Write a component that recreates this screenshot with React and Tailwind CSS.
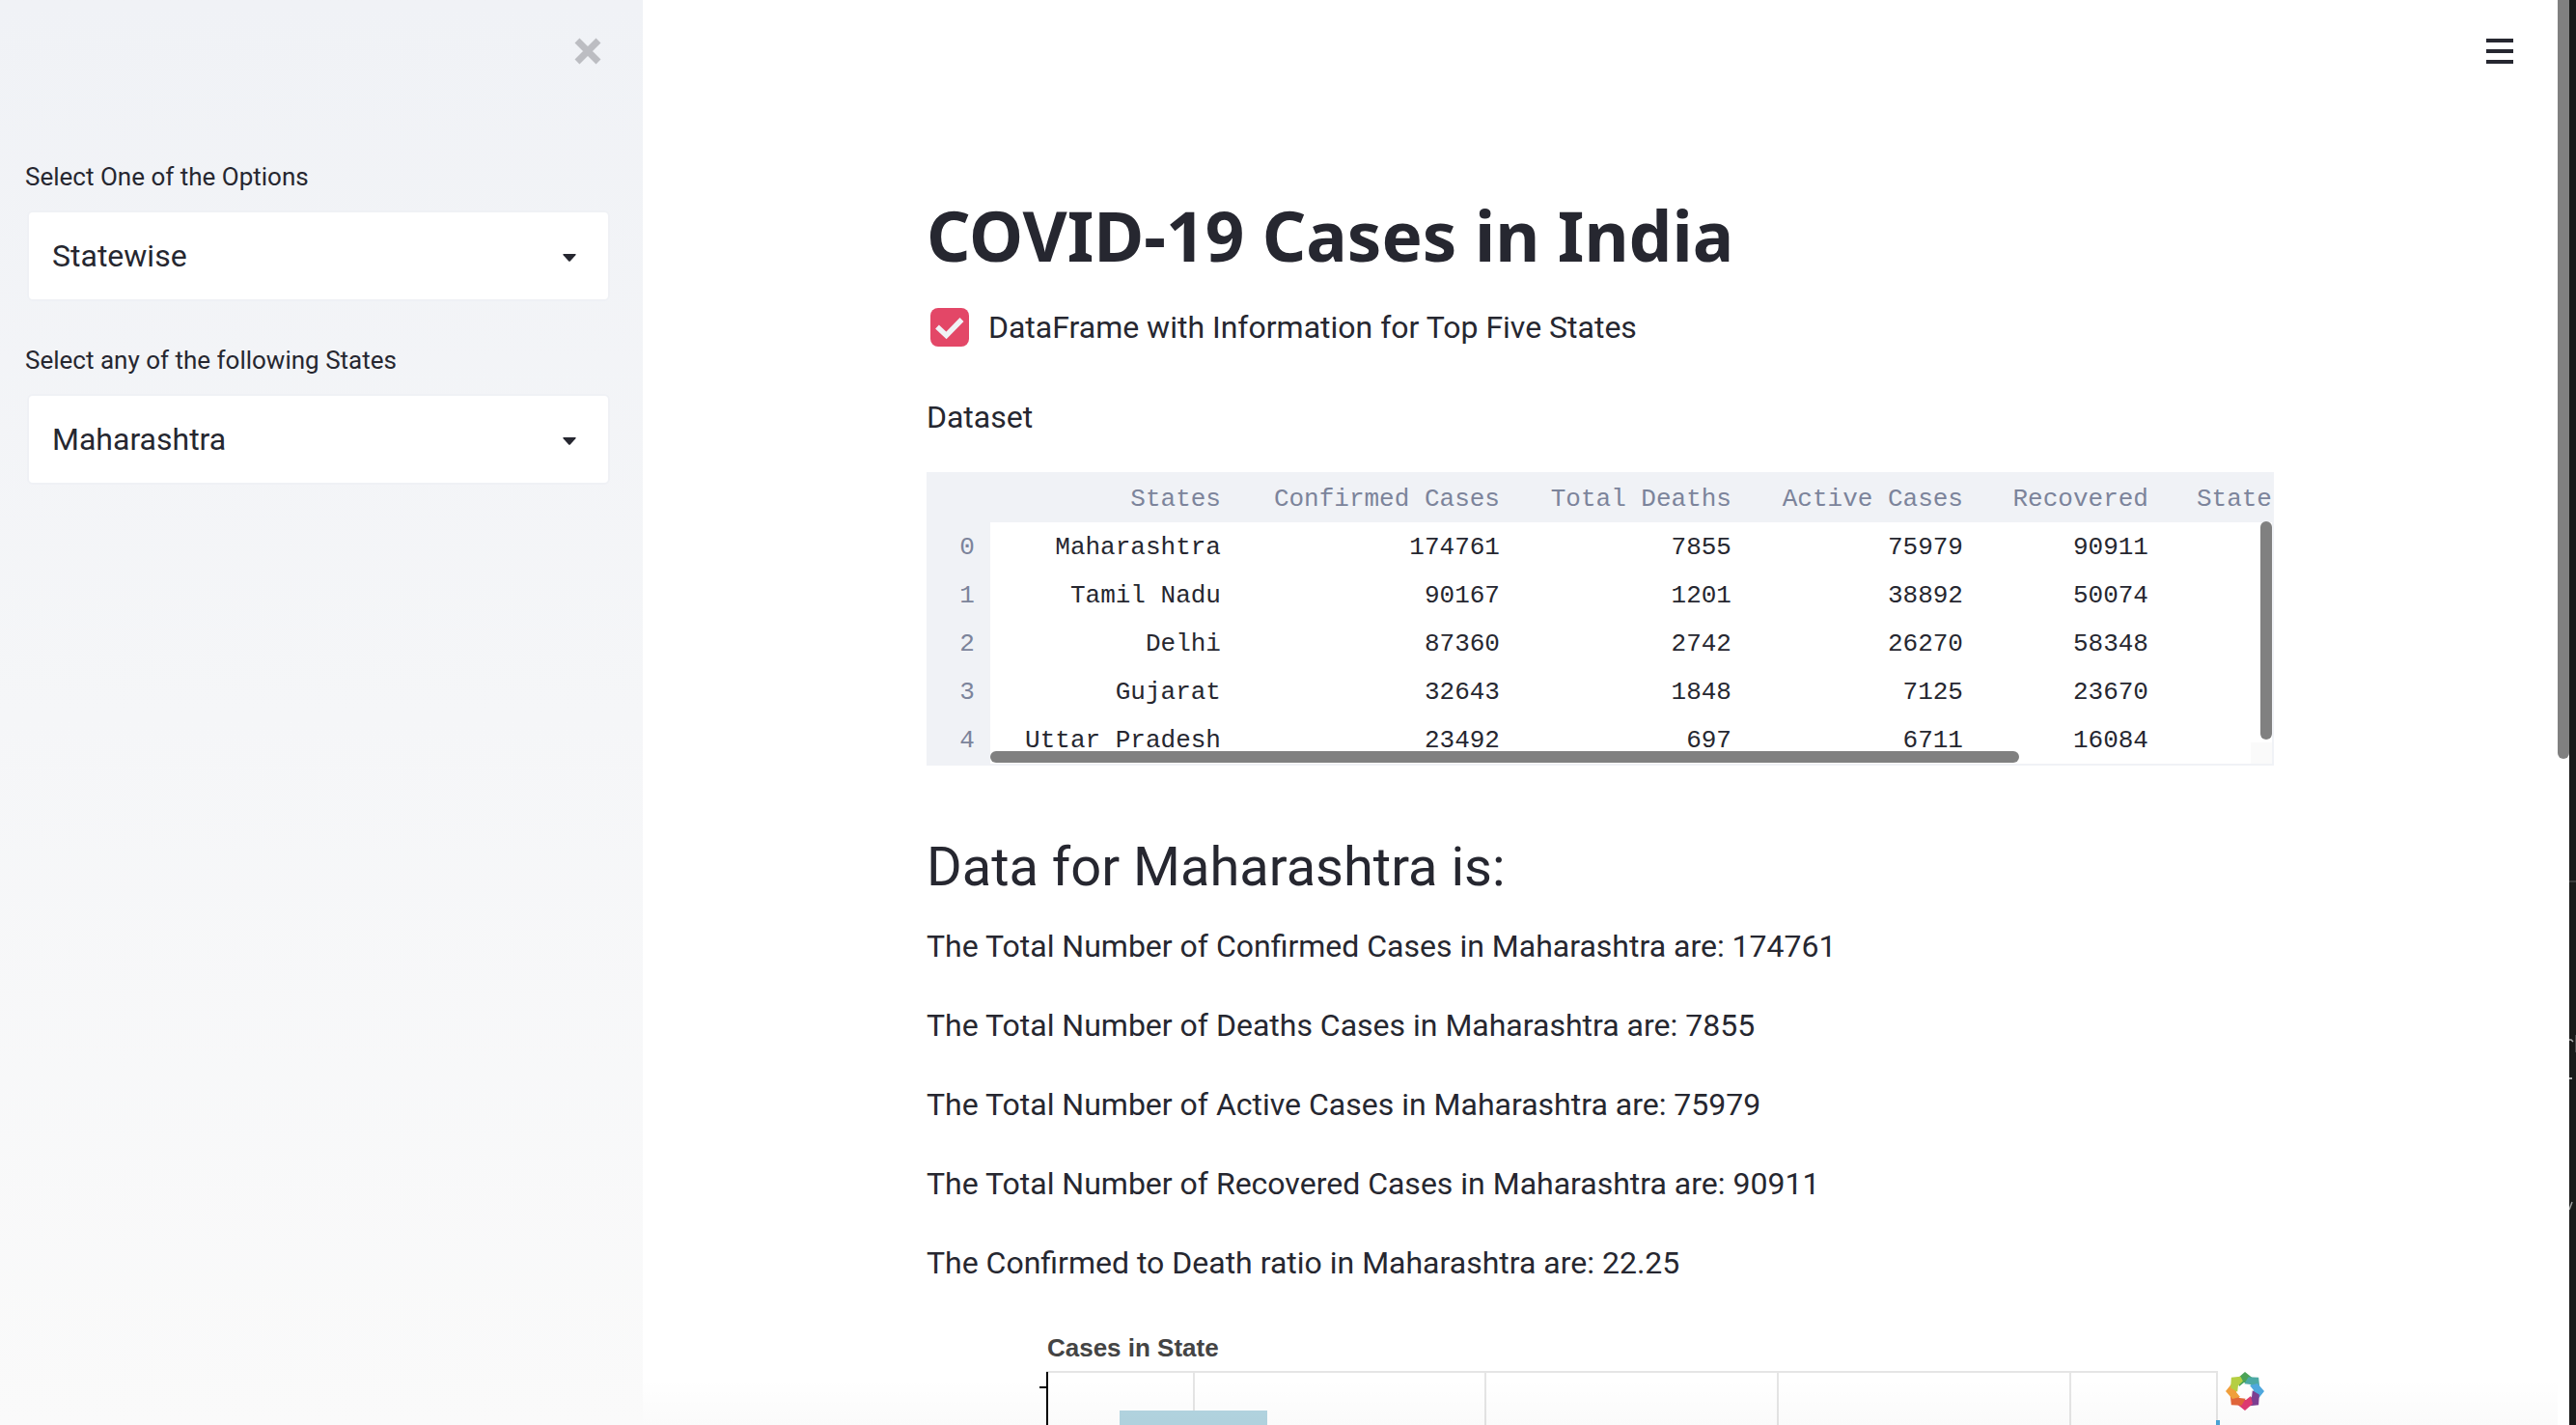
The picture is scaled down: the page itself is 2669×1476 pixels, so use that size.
import { useState } from 'react';

const columns = [
  { name: 'States', width: 'w-[255px]' },
  { name: 'Confirmed Cases', width: 'w-[289px]' },
  { name: 'Total Deaths', width: 'w-[240px]' },
  { name: 'Active Cases', width: 'w-[240px]' },
  { name: 'Recovered', width: 'w-[192px]' },
];

const rows = [
  ['Maharashtra', 174761, 7855, 75979, 90911],
  ['Tamil Nadu', 90167, 1201, 38892, 50074],
  ['Delhi', 87360, 2742, 26270, 58348],
  ['Gujarat', 32643, 1848, 7125, 23670],
  ['Uttar Pradesh', 23492, 697, 6711, 16084],
];

const facts = [
  'The Total Number of Confirmed Cases in Maharashtra are: 174761',
  'The Total Number of Deaths Cases in Maharashtra are: 7855',
  'The Total Number of Active Cases in Maharashtra are: 75979',
  'The Total Number of Recovered Cases in Maharashtra are: 90911',
  'The Confirmed to Death ratio in Maharashtra are: 22.25',
];

const bladeColors = ['#4ba357', '#4ca9a5', '#4fa8de', '#7d3f92', '#df3a72', '#e2663a', '#f1a03c', '#b5cf42'];

function SelectField({ id, label, options }) {
  return (
    <div>
      <label htmlFor={id} className="block text-[26px] leading-10">{label}</label>
      <div className="mx-0.5 mt-[15px] grid items-center">
        <select
          id={id}
          className="col-start-1 row-start-1 h-[94px] w-full appearance-none rounded-md border-2 border-[#eff1f5] bg-white pr-16 pl-6 text-[32px]"
        >
          {options.map((o) => <option key={o}>{o}</option>)}
        </select>
        <svg
          viewBox="0 0 14 8"
          className="pointer-events-none col-start-1 row-start-1 mt-1 mr-[35px] h-2 w-3.5 justify-self-end"
          aria-hidden="true"
        >
          <path d="M1 0H13Q14.4 0 13.4 1.2L7.8 7.4Q7 8.2 6.2 7.4L.6 1.2Q-.4 0 1 0Z" fill="#262730" />
        </svg>
      </div>
    </div>
  );
}

function Sidebar() {
  return (
    <aside className="w-[24.95%] shrink-0 bg-linear-to-b from-[#f0f2f6] to-[#fafafa] pr-8 pl-[26px]">
      <div className="flex h-[163px] justify-end pt-[38px] pr-2.5">
        <button type="button" aria-label="Close sidebar" className="h-[30px] w-[30px]">
          <svg viewBox="0 0 30 30" aria-hidden="true">
            <path d="M4 4L26 26M26 4L4 26" stroke="#bcbdc2" strokeWidth="7" />
          </svg>
        </button>
      </div>
      <div className="flex flex-col gap-[41px]">
        <SelectField id="mode" label="Select One of the Options" options={['Statewise']} />
        <SelectField id="state" label="Select any of the following States" options={['Maharashtra']} />
      </div>
    </aside>
  );
}

function DataTable() {
  return (
    <div className="relative overflow-hidden border-2 border-[#f0f2f6] font-['Liberation_Mono',monospace] text-[26px] leading-[47px]">
      <table className="w-full table-fixed border-collapse whitespace-nowrap">
        <thead className="bg-[#f0f2f6] text-[#7c849b]">
          <tr>
            <th className="w-16 p-0" aria-label="Index" />
            {columns.map((c) => (
              <th key={c.name} scope="col" className={`${c.width} p-0 pt-[3px] pr-4 text-right font-normal`}>{c.name}</th>
            ))}
            <th scope="col" className="p-0 pt-[3px] pl-[34px] text-left font-normal">State</th>
          </tr>
        </thead>
        <tbody>
          {rows.map((row, i) => (
            <tr key={row[0]}>
              <th scope="row" className="bg-[#f0f2f6] p-0 pt-[3px] pr-4 text-right font-normal text-[#7c849b]">{i}</th>
              {row.map((cell, j) => <td key={columns[j].name} className="p-0 pt-[3px] pr-4 text-right">{cell}</td>)}
              <td />
            </tr>
          ))}
        </tbody>
      </table>
      <div className="absolute right-0 bottom-0 h-[22px] w-[22px] bg-[#fafafa]" />
      <div className="absolute top-[49px] right-0 bottom-[25px] w-3 rounded-full bg-[#808080]" />
      <div className="absolute bottom-px left-16 h-3 w-[1066px] rounded-full bg-[#808080]" />
    </div>
  );
}

function CasesChart() {
  return (
    <section>
      <h3 className="pl-[125px] font-['Liberation_Sans',sans-serif] text-[26px] leading-9 font-bold text-[#444]">Cases in State</h3>
      <svg viewBox="0 0 1396 62" className="block w-full" aria-label="Bar chart of cases in state">
        <g fill="#e5e5e5">
          <rect x="124" y="6" width="1214" height="2" />
          <rect x="276" y="8" width="2" height="54" />
          <rect x="578" y="8" width="2" height="54" />
          <rect x="881" y="8" width="2" height="54" />
          <rect x="1184" y="8" width="2" height="54" />
          <rect x="1336" y="6" width="2" height="56" />
        </g>
        <rect x="124" y="7" width="2" height="55" fill="#000" />
        <rect x="117" y="22" width="7" height="2" fill="#000" />
        <rect x="200" y="47" width="153" height="15" fill="#b3d5e1" />
        <rect x="1336" y="57" width="4" height="5" fill="#4ba6d8" />
        <g transform="translate(1346 7)">
          {bladeColors.map((color, i) => (
            <polygon
              key={color}
              points="20,0 27.5,6 26,11 19,11 14,15 12,7"
              fill={color}
              transform={`rotate(${i * 45} 20 20)`}
            />
          ))}
        </g>
      </svg>
    </section>
  );
}

export default function App() {
  const [showFrame, setShowFrame] = useState(true);
  return (
    <div className="flex h-screen overflow-hidden bg-white font-['Roboto',sans-serif] text-[#262730]">
      <Sidebar />
      <main className="relative min-w-0 flex-1 overflow-hidden px-14">
        <button type="button" aria-label="Menu" className="absolute top-10 right-[46px] flex w-7 flex-col gap-[7px]">
          <span className="h-1 w-full bg-[#262730]" />
          <span className="h-1 w-full bg-[#262730]" />
          <span className="h-1 w-full bg-[#262730]" />
        </button>
        <div className="mx-auto w-full max-w-[1396px] pt-[200px] text-[32px] leading-[50px]">
          <h1 className="font-['Noto_Sans',sans-serif] text-[71px] leading-[88px] font-bold">COVID-19 Cases in India</h1>
          <label className="mt-[26px] flex items-center pl-1">
            <input
              type="checkbox"
              checked={showFrame}
              onChange={(e) => setShowFrame(e.target.checked)}
              className="peer sr-only"
            />
            <span className="mr-5 h-10 w-10 rounded-lg bg-[#e34767]">
              <svg viewBox="0 0 40 40" aria-hidden="true">
                {showFrame && <path d="M7 19.5L16.5 28.5L32.5 12" fill="none" stroke="#f0f2f6" strokeWidth="5.5" />}
              </svg>
            </span>
            DataFrame with Information for Top Five States
          </label>
          <p className="mt-[43px] mb-8">Dataset</p>
          <DataTable />
          <h2 className="mt-[69px] mb-[21px] text-[56px] leading-[72px]">Data for Maharashtra is:</h2>
          <div className="mb-[45px] flex flex-col gap-8">
            {facts.map((f) => <p key={f}>{f}</p>)}
          </div>
          <CasesChart />
        </div>
        <div className="pointer-events-none absolute inset-x-0 bottom-0 h-12 bg-linear-to-b from-transparent to-black/2" />
      </main>
      <div className="w-3 shrink-0">
        <div className="h-[786px] rounded-b-full bg-[#808080]" />
      </div>
      <div className="w-[7px] shrink-0 bg-[#191a19]">
        <svg viewBox="0 0 7 1476" className="w-full" aria-hidden="true">
          <rect y="912" width="7" height="2" fill="#3a3a3a" />
          <path d="M0 1077H2L4 1079" stroke="#b0b0b0" strokeWidth="1.5" fill="none" />
          <rect x="6" y="1072" width="1" height="18" fill="#4a4a4a" />
          <rect y="1116" width="3" height="2" fill="#b0b0b0" />
          <path d="M3 1245L0 1253" stroke="#a0a0a0" strokeWidth="1.5" />
        </svg>
      </div>
    </div>
  );
}
